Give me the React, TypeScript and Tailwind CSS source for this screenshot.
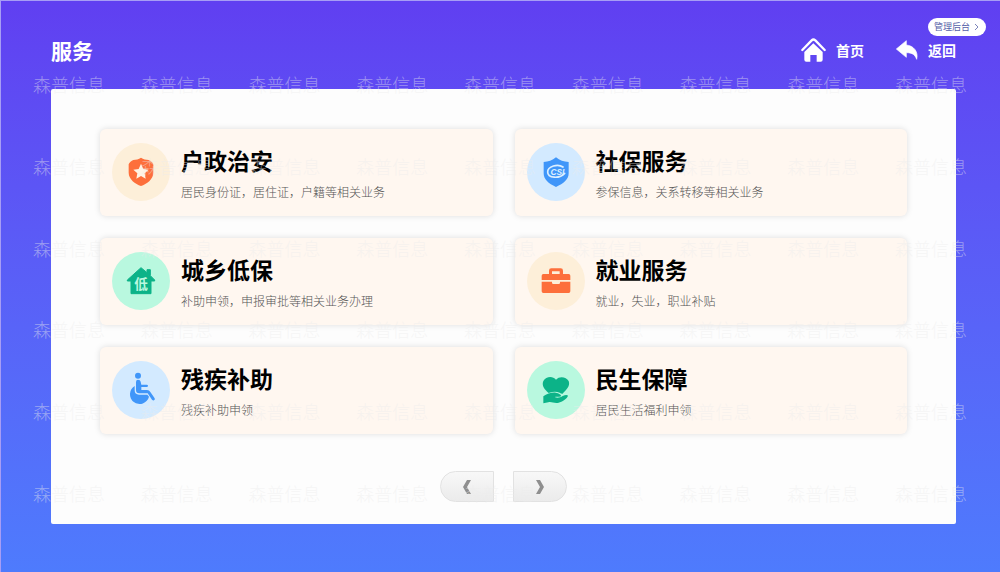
import type { ReactNode } from "react";

type Service = {
  title: string;
  desc: string;
  tone: string;
  icon: ReactNode;
};

const ORANGE = "#fd6f3b";
const BLUE = "#4096f9";
const GREEN = "#0cb388";

const services: Service[] = [
  {
    title: "户政治安",
    desc: "居民身份证，居住证，户籍等相关业务",
    tone: "bg-[#fdefd9]",
    icon: (
      <>
        <path
          fill={ORANGE}
          d="M87 44C94 49 102 50 110 51C116 53 122 58 124 64V89C124 109 104 123 87 129C70 123 50 109 50 89V64C52 58 58 53 64 51C72 50 80 49 87 44Z"
        />
        <path
          fill="#fff3e4"
          d="M87 62L94 78L110 80L98 91L101 107L87 99L73 107L76 91L64 80L80 78Z"
        />
      </>
    ),
  },
  {
    title: "社保服务",
    desc: "参保信息，关系转移等相关业务",
    tone: "bg-[#d3eaff]",
    icon: (
      <>
        <path
          fill={BLUE}
          d="M87 43C98 53 110 56 125 57V91C125 109 110 122 87 132C64 122 50 109 50 91V57C64 56 76 53 87 43Z"
        />
        <path
          fill="none"
          stroke="#dcefff"
          strokeWidth="5"
          strokeLinecap="round"
          d="M108 72C92 61 62 70 62 87C62 106 98 108 113 91"
        />
        <text
          x="91"
          y="96"
          fill="#dcefff"
          fontSize="25"
          fontWeight="700"
          fontStyle="italic"
          textAnchor="middle"
          fontFamily="Liberation Sans, sans-serif"
        >
          CSI
        </text>
      </>
    ),
  },
  {
    title: "城乡低保",
    desc: "补助申领，申报审批等相关业务办理",
    tone: "bg-[#b9f8df]",
    icon: (
      <>
        <path
          fill={GREEN}
          stroke={GREEN}
          strokeWidth="3"
          strokeLinejoin="round"
          d="M87 47L105 62V53H115V71L128 84V87H117V125H57V87H46V84Z"
        />
        <text
          x="87"
          y="111"
          fill="#b9f8df"
          fontSize="41"
          fontWeight="700"
          textAnchor="middle"
          fontFamily="Noto Sans CJK SC, sans-serif"
        >
          低
        </text>
      </>
    ),
  },
  {
    title: "就业服务",
    desc: "就业，失业，职业补贴",
    tone: "bg-[#fdefd9]",
    icon: (
      <>
        <path
          fill={ORANGE}
          d="M66 66V56Q66 49 73 49H101Q108 49 108 56V66H125Q130 66 130 71V84H44V71Q44 66 49 66ZM75 66H98V58H75Z"
        />
        <path
          fill={ORANGE}
          d="M44 89H75V92Q75 96 79 96H95Q99 96 99 92V89H130V118Q130 123 125 123H49Q44 123 44 118Z"
        />
      </>
    ),
  },
  {
    title: "残疾补助",
    desc: "残疾补助申领",
    tone: "bg-[#d3eaff]",
    icon: (
      <>
        <circle cx="78" cy="44" r="9" fill={BLUE} />
        <path
          fill={BLUE}
          d="M68 75A29 29 0 1 0 111 107L106 101H81Q68 101 68 88Z"
        />
        <path
          fill={BLUE}
          d="M72 63Q72 56 78 56Q85 56 86 62L88 71H104Q108 71 108 74Q108 78 104 78H88V87H105Q112 87 115 93L128 112Q130 116 126 118Q123 119 120 116L107 97H82Q72 97 72 87Z"
        />
      </>
    ),
  },
  {
    title: "民生保障",
    desc: "居民生活福利申领",
    tone: "bg-[#b9f8df]",
    icon: (
      <>
        <path
          fill={GREEN}
          d="M87 56C97 44 118 47 125 60C131 76 116 87 107 98Q103 99 98 95C87 91 77 92 65 96C53 86 43 74 49 60C57 46 77 44 87 56Z"
        />
        <path
          fill={GREEN}
          d="M49 106C59 98 74 94 86 95C96 97 103 101 102 105C100 109 90 106 83 108C91 113 100 109 107 105C115 101 121 101 123 104C121 112 105 123 95 125C82 128 73 121 64 124L49 127Z"
        />
      </>
    ),
  },
];

function HomeIcon() {
  return (
    <svg viewBox="0 0 75 72" className="h-6 w-[25px]" aria-hidden="true">
      <path
        d="M4 36L32 7Q37 2 43 7L71 36"
        fill="none"
        stroke="white"
        strokeWidth="7"
        strokeLinecap="round"
        strokeLinejoin="round"
      />
      <path
        fill="white"
        d="M37 16L65 42V65Q65 71 59 71H47V51H28V71H16Q10 71 10 65V42Z"
      />
    </svg>
  );
}

function BackIcon() {
  return (
    <svg viewBox="0 0 66 60" className="h-5 w-[22px]" aria-hidden="true">
      <path
        fill="white"
        stroke="white"
        strokeWidth="2"
        strokeLinejoin="round"
        d="M1 27L31 2V15C52 17 68 34 62 58C57 44 49 38 31 38V52Z"
      />
    </svg>
  );
}

function ServiceCard({ title, desc, tone, icon }: Service) {
  return (
    <a
      href="#"
      className="flex h-[87px] items-center gap-[11px] rounded-md bg-[#fff7f0] px-3 pb-[2px] shadow-[0_0_6px_rgba(0,0,0,0.13)]"
    >
      <span className={`size-[58px] shrink-0 rounded-full ${tone}`}>
        <svg viewBox="0 0 174 174" className="size-full" aria-hidden="true">
          {icon}
        </svg>
      </span>
      <span className="flex min-w-0 flex-col gap-2">
        <span className="text-[23px] leading-8 font-bold whitespace-nowrap text-black">
          {title}
        </span>
        <span className="text-xs leading-4 font-light whitespace-nowrap text-[#555]">
          {desc}
        </span>
      </span>
    </a>
  );
}

function Watermark() {
  return (
    <div
      aria-hidden="true"
      className="pointer-events-none absolute inset-0 flex flex-col justify-between overflow-hidden pt-[73px] pr-[33px] pb-[69px] pl-8 text-lg leading-5 font-light text-[#ececec]/45"
    >
      {Array.from({ length: 6 }, (_, row) => (
        <div key={row} className="flex justify-between">
          {Array.from({ length: 9 }, (_, col) => (
            <span key={col} className="whitespace-nowrap">
              森普信息
            </span>
          ))}
        </div>
      ))}
    </div>
  );
}

function PagerArrow({ d }: { d: string }) {
  return (
    <svg viewBox="0 0 8 14" className="h-[14px] w-2" aria-hidden="true">
      <path d={d} fill="#8f8f8f" />
    </svg>
  );
}

export default function App() {
  return (
    <div className="relative min-h-screen border-t border-l border-[#a79df5] bg-linear-to-b from-[#603ff1] to-[#4e7bfd] pr-11 pl-[50px] font-['Noto_Sans_CJK_SC',sans-serif]">
      <header className="flex h-[88px] items-center justify-between pt-[10px]">
        <h1 className="text-[21px] leading-7 font-bold text-white">服务</h1>
        <nav className="flex items-center gap-8 text-sm leading-5 font-bold text-white">
          <a href="#" className="flex items-center gap-[10px]">
            <HomeIcon />
            首页
          </a>
          <a href="#" className="flex items-center gap-[10px]">
            <BackIcon />
            返回
          </a>
        </nav>
      </header>

      <main className="rounded-xs bg-[#fdfdfd] px-[49px] pt-10 pb-[22px]">
        <div className="grid grid-cols-2 gap-[22px]">
          {services.map((s) => (
            <ServiceCard key={s.title} {...s} />
          ))}
        </div>
        <div className="mt-[37px] flex justify-center gap-[19px]">
          <button
            type="button"
            aria-label="上一页"
            className="flex h-[31px] w-[54px] items-center justify-center rounded-l-full border border-[#e2e2e2] bg-linear-to-b from-[#f8f8f8] to-[#ebebeb]"
          >
            <PagerArrow d="M4 0H8L4 7L8 14H4L0 7Z" />
          </button>
          <button
            type="button"
            aria-label="下一页"
            className="flex h-[31px] w-[54px] items-center justify-center rounded-r-full border border-[#e2e2e2] bg-linear-to-b from-[#f8f8f8] to-[#ebebeb]"
          >
            <PagerArrow d="M4 0H0L4 7L0 14H4L8 7Z" />
          </button>
        </div>
      </main>

      <Watermark />

      <button
        type="button"
        className="absolute top-[17px] right-[14px] flex h-[18px] items-center gap-1 rounded-full bg-white px-[6px] text-[9px] leading-3 whitespace-nowrap text-[#5560a8]"
      >
        管理后台
        <svg viewBox="0 0 6 8" className="h-2 w-[6px]" aria-hidden="true">
          <path d="M1 1L4 4L1 7" fill="none" stroke="#7c84bb" strokeWidth="1" />
        </svg>
      </button>
    </div>
  );
}
